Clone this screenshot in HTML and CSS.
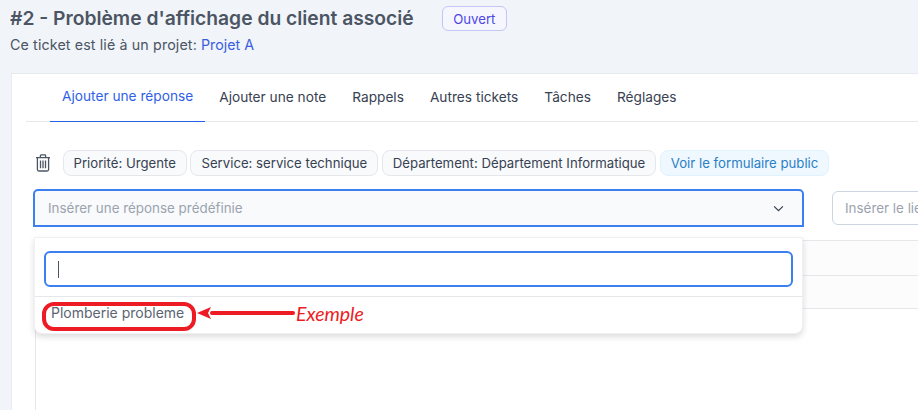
FILE: index.html
```html
<!DOCTYPE html>
<html lang="fr">
<head>
<meta charset="utf-8">
<title>Ticket #2</title>
<link rel="stylesheet" href="styles.css">
</head>
<body>
<header class="head">
  <div class="title-row">
    <h1 class="title">#2 - Problème d'affichage du client associé</h1>
    <span class="status">Ouvert</span>
  </div>
  <p class="sub">Ce ticket est lié à un projet: <a class="link">Projet A</a></p>
</header>
<main class="card">
  <nav class="tabs">
    <a class="tab active">Ajouter une réponse</a>
    <a class="tab">Ajouter une note</a>
    <a class="tab">Rappels</a>
    <a class="tab">Autres tickets</a>
    <a class="tab">Tâches</a>
    <a class="tab">Réglages</a>
  </nav>
  <div class="chips">
    <svg class="trash" viewBox="0 0 16 18" width="16" height="18" fill="none" stroke="#4b5563" stroke-width="1.3">
      <path d="M1 3.6h14M5.4 3.4V1.6c0-.4.3-.7.7-.7h3.800c.4 0 .7.3.7.7v1.800"/>
      <path d="M2.400 3.800v11.700c0 .9.6 1.500 1.500 1.500h8.200c.9 0 1.500-.6 1.500-1.500V3.800"/>
      <path d="M5.500 6.500v7.800M8 6.500v7.800M10.500 6.500v7.800"/>
    </svg>
    <span class="chip">Priorité: Urgente</span>
    <span class="chip">Service: service technique</span>
    <span class="chip">Département: Département Informatique</span>
    <span class="chip chip-blue">Voir le formulaire public</span>
  </div>
  <div class="fields">
    <div class="select">
      <span>Insérer une réponse prédéfinie</span>
      <svg viewBox="0 0 12 8" width="11" height="7" fill="none" stroke="#374151" stroke-width="1.400"><path d="M1 1.500l5 5 5-5"/></svg>
    </div>
    <div class="link-input">Insérer le lien</div>
  </div>
  <div class="editor">
    <div class="bar"></div>
    <div class="bar"></div>
  </div>
  <div class="dropdown">
    <div class="search-wrap"><div class="search"><i class="caret"></i></div></div>
    <div class="option">Plomberie probleme</div>
  </div>
  <div class="ring"></div>
  <svg class="arrow" viewBox="0 0 98 14" width="98" height="14">
    <path d="M0 7L14 1l-3 6 3 6z" fill="#ed1c24"/>
    <path d="M15 7h81" stroke="#ed1c24" stroke-width="4" stroke-linecap="round"/>
  </svg>
  <span class="note">Exemple</span>
</main>
</body>
</html>
```
FILE: styles.css
```css
* { box-sizing: border-box; }
html, body { height: 100%; }
body {
  margin: 0;
  height: 410px;
  overflow: hidden;
  background: #f1f4f9;
  font-family: Inter, "Liberation Sans", sans-serif;
  color: #4b5563;
}
.head { padding: 5px 10px 0; height: 73px; }
.title-row { display: flex; align-items: center; gap: 28px; height: 27px; }
.title { margin: 0; font-size: 19.25px; line-height: 27px; font-weight: 600; color: #4b5563; white-space: nowrap; }
.status {
  display: flex; align-items: center; height: 25px; padding: 0 10.5px;
  font-size: 13.2px; color: #4f46e5; background: #f5f6fe;
  border: 1px solid #c4c6f5; border-radius: 6px;
}
.sub { margin: 3px 0 0; font-size: 14.25px; line-height: 20px; letter-spacing: .13px; color: #4b5563; }
.link { color: #3b5fe0; letter-spacing: 0; }
.card {
  position: relative;
  margin-left: 11px;
  height: 337px;
  background: #fff;
  border-top: 1px solid #e5e9f0;
  border-left: 1px solid #e8ecf2;
  padding-left: 14px;
}
.tabs {
  display: flex;
  height: 48px;
  padding-left: 24px;
  border-bottom: 1px solid #e5e7eb;
}
.tab {
  padding: 0 12px 3px;
  margin-right: 2px;
  height: 48px;
  display: flex; align-items: center;
  font-size: 13.7px;
  color: #374151;
  white-space: nowrap;
}
.tab.active { color: #2f5fe8; border-bottom: 1px solid #2563eb; }
.chips { display: flex; align-items: center; gap: 3.5px; margin-top: 28px; margin-left: 9px; height: 26px; }
.trash { margin-right: 8px; }
.chip {
  display: flex; align-items: center; height: 26px; padding: 0 10px;
  font-size: 13.2px; color: #374151; white-space: nowrap;
  background: #f8fafc; border: 1px solid #e5e7eb; border-radius: 8px;
}
.chip-blue { color: #2b7fc4; background: #eff8ff; border-color: #e0f2fe; }
.fields { display: flex; align-items: center; gap: 28px; margin-top: 13px; margin-left: 7px; width: 900px; }
.select {
  flex: none; width: 771px; height: 38px;
  display: flex; align-items: center; justify-content: space-between;
  padding: 0 18px 0 13px;
  font-size: 13.4px; color: #9ca3af;
  background: #f8fafc;
  border: 2px solid #3b7ff0;
  border-radius: 5px 5px 0 0;
}
.link-input {
  flex: none; width: 200px; height: 34px;
  display: flex; align-items: center; padding: 0 12px;
  font-size: 13.4px; color: #9ca3af; white-space: nowrap;
  border: 1px solid #cbd5e1; border-radius: 6px;
}
.editor {
  margin-top: 13px; margin-left: 9px;
  height: 170px; width: 900px;
  border-left: 1px solid #e5e7eb;
  border-top: 1px solid #e5e7eb;
}
.bar { height: 35px; background: #fcfcfd; border-bottom: 1px solid #e5e7eb; }
.bar + .bar { height: 33px; }
.dropdown {
  position: absolute; left: 22px; top: 163px; width: 769px; height: 97px;
  background: #fff;
  border: 1px solid #eef0f3;
  border-radius: 0 0 8px 8px;
  box-shadow: 0 3px 6px rgba(0, 0, 0, .14);
}
.search-wrap { height: 59px; padding: 13px 9px 0; border-bottom: 1px solid #e5e7eb; }
.search {
  height: 36px; display: flex; align-items: center; padding-left: 12px;
  border: 2px solid #3b7ff0; border-radius: 6px;
}
.caret { display: block; width: 1px; height: 17px; background: #4b5563; }
.option { padding: 7px 16px; font-size: 14px; line-height: 18px; color: #5b6472; }
.ring {
  position: absolute; left: 30px; top: 228px; width: 154px; height: 29px;
  border: 4.5px solid #ed1c24; border-radius: 12px;
}
.arrow { position: absolute; left: 185px; top: 232px; }
.note {
  position: absolute; left: 284px; top: 228px;
  font-family: Lato, sans-serif; font-style: italic;
  font-size: 19.5px; line-height: 24px; color: #ed1c24;
}
```
